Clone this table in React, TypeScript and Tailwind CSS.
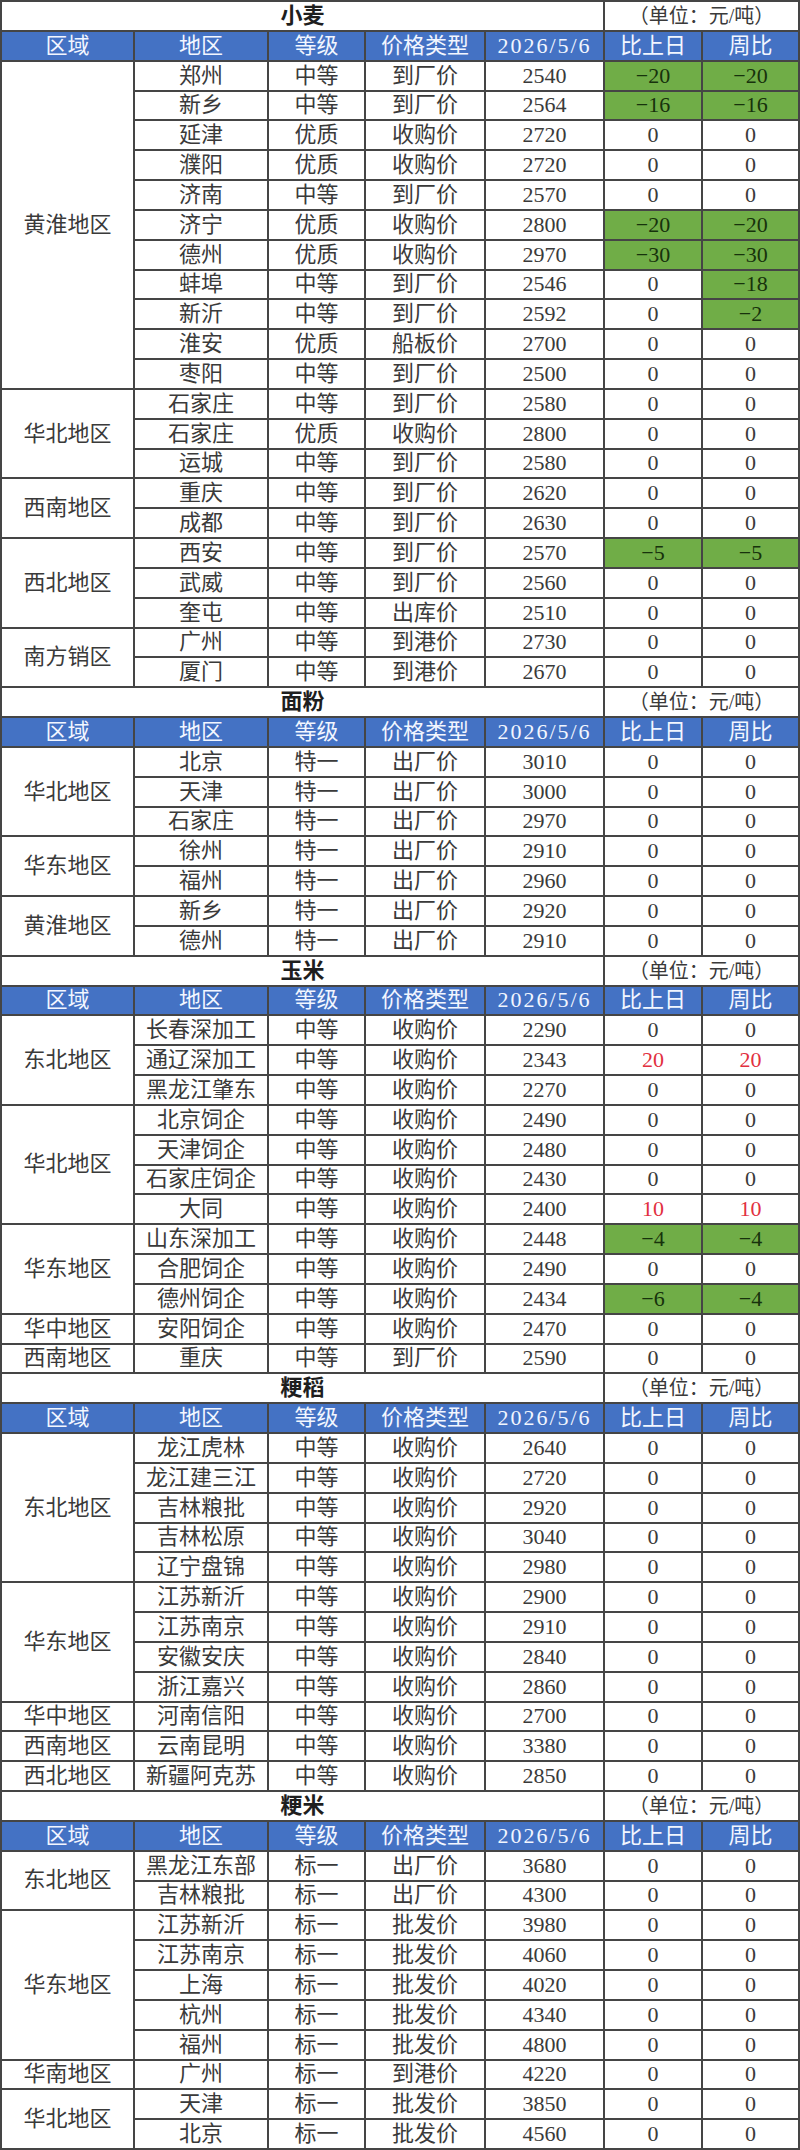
import React from "react";

type Row = [string, string, string, number, number, number];
type Group = { region: string; rows: Row[] };
type Section = { title: string; groups: Group[] };

const sections: Section[] = [
  {
    title: "小麦",
    groups: [
      {
        region: "黄淮地区",
        rows: [
          ["郑州", "中等", "到厂价", 2540, -20, -20],
          ["新乡", "中等", "到厂价", 2564, -16, -16],
          ["延津", "优质", "收购价", 2720, 0, 0],
          ["濮阳", "优质", "收购价", 2720, 0, 0],
          ["济南", "中等", "到厂价", 2570, 0, 0],
          ["济宁", "优质", "收购价", 2800, -20, -20],
          ["德州", "优质", "收购价", 2970, -30, -30],
          ["蚌埠", "中等", "到厂价", 2546, 0, -18],
          ["新沂", "中等", "到厂价", 2592, 0, -2],
          ["淮安", "优质", "船板价", 2700, 0, 0],
          ["枣阳", "中等", "到厂价", 2500, 0, 0],
        ],
      },
      {
        region: "华北地区",
        rows: [
          ["石家庄", "中等", "到厂价", 2580, 0, 0],
          ["石家庄", "优质", "收购价", 2800, 0, 0],
          ["运城", "中等", "到厂价", 2580, 0, 0],
        ],
      },
      {
        region: "西南地区",
        rows: [
          ["重庆", "中等", "到厂价", 2620, 0, 0],
          ["成都", "中等", "到厂价", 2630, 0, 0],
        ],
      },
      {
        region: "西北地区",
        rows: [
          ["西安", "中等", "到厂价", 2570, -5, -5],
          ["武威", "中等", "到厂价", 2560, 0, 0],
          ["奎屯", "中等", "出库价", 2510, 0, 0],
        ],
      },
      {
        region: "南方销区",
        rows: [
          ["广州", "中等", "到港价", 2730, 0, 0],
          ["厦门", "中等", "到港价", 2670, 0, 0],
        ],
      },
    ],
  },
  {
    title: "面粉",
    groups: [
      {
        region: "华北地区",
        rows: [
          ["北京", "特一", "出厂价", 3010, 0, 0],
          ["天津", "特一", "出厂价", 3000, 0, 0],
          ["石家庄", "特一", "出厂价", 2970, 0, 0],
        ],
      },
      {
        region: "华东地区",
        rows: [
          ["徐州", "特一", "出厂价", 2910, 0, 0],
          ["福州", "特一", "出厂价", 2960, 0, 0],
        ],
      },
      {
        region: "黄淮地区",
        rows: [
          ["新乡", "特一", "出厂价", 2920, 0, 0],
          ["德州", "特一", "出厂价", 2910, 0, 0],
        ],
      },
    ],
  },
  {
    title: "玉米",
    groups: [
      {
        region: "东北地区",
        rows: [
          ["长春深加工", "中等", "收购价", 2290, 0, 0],
          ["通辽深加工", "中等", "收购价", 2343, 20, 20],
          ["黑龙江肇东", "中等", "收购价", 2270, 0, 0],
        ],
      },
      {
        region: "华北地区",
        rows: [
          ["北京饲企", "中等", "收购价", 2490, 0, 0],
          ["天津饲企", "中等", "收购价", 2480, 0, 0],
          ["石家庄饲企", "中等", "收购价", 2430, 0, 0],
          ["大同", "中等", "收购价", 2400, 10, 10],
        ],
      },
      {
        region: "华东地区",
        rows: [
          ["山东深加工", "中等", "收购价", 2448, -4, -4],
          ["合肥饲企", "中等", "收购价", 2490, 0, 0],
          ["德州饲企", "中等", "收购价", 2434, -6, -4],
        ],
      },
      { region: "华中地区", rows: [["安阳饲企", "中等", "收购价", 2470, 0, 0]] },
      { region: "西南地区", rows: [["重庆", "中等", "到厂价", 2590, 0, 0]] },
    ],
  },
  {
    title: "粳稻",
    groups: [
      {
        region: "东北地区",
        rows: [
          ["龙江虎林", "中等", "收购价", 2640, 0, 0],
          ["龙江建三江", "中等", "收购价", 2720, 0, 0],
          ["吉林粮批", "中等", "收购价", 2920, 0, 0],
          ["吉林松原", "中等", "收购价", 3040, 0, 0],
          ["辽宁盘锦", "中等", "收购价", 2980, 0, 0],
        ],
      },
      {
        region: "华东地区",
        rows: [
          ["江苏新沂", "中等", "收购价", 2900, 0, 0],
          ["江苏南京", "中等", "收购价", 2910, 0, 0],
          ["安徽安庆", "中等", "收购价", 2840, 0, 0],
          ["浙江嘉兴", "中等", "收购价", 2860, 0, 0],
        ],
      },
      { region: "华中地区", rows: [["河南信阳", "中等", "收购价", 2700, 0, 0]] },
      { region: "西南地区", rows: [["云南昆明", "中等", "收购价", 3380, 0, 0]] },
      { region: "西北地区", rows: [["新疆阿克苏", "中等", "收购价", 2850, 0, 0]] },
    ],
  },
  {
    title: "粳米",
    groups: [
      {
        region: "东北地区",
        rows: [
          ["黑龙江东部", "标一", "出厂价", 3680, 0, 0],
          ["吉林粮批", "标一", "出厂价", 4300, 0, 0],
        ],
      },
      {
        region: "华东地区",
        rows: [
          ["江苏新沂", "标一", "批发价", 3980, 0, 0],
          ["江苏南京", "标一", "批发价", 4060, 0, 0],
          ["上海", "标一", "批发价", 4020, 0, 0],
          ["杭州", "标一", "批发价", 4340, 0, 0],
          ["福州", "标一", "批发价", 4800, 0, 0],
        ],
      },
      { region: "华南地区", rows: [["广州", "标一", "到港价", 4220, 0, 0]] },
      {
        region: "华北地区",
        rows: [
          ["天津", "标一", "批发价", 3850, 0, 0],
          ["北京", "标一", "批发价", 4560, 0, 0],
        ],
      },
    ],
  },
];

const spanClass: Record<number, string> = {
  1: "row-span-1",
  2: "row-span-2",
  3: "row-span-3",
  4: "row-span-4",
  5: "row-span-5",
  11: "row-span-11",
};

const base = "flex items-center justify-center text-[22px] leading-none";
const cell = `${base} bg-white text-[#3a3a3a]`;
const headCell = `${base} bg-[#4472c4] text-[#f2f6ff]`;

function fmt(v: number) {
  return v < 0 ? `\u2212${Math.abs(v)}` : `${v}`;
}

function ChangeCell({ v }: { v: number }) {
  if (v < 0) {
    return <div className={`${base} bg-[#70ad47] text-[#17320c]`}>{fmt(v)}</div>;
  }
  if (v > 0) {
    return <div className={`${base} bg-white text-[#e2303f]`}>{fmt(v)}</div>;
  }
  return <div className={cell}>{fmt(v)}</div>;
}

export default function App() {
  const items: React.ReactNode[] = [];
  sections.forEach((s, si) => {
    items.push(
      <div
        key={`t-${si}`}
        className="col-span-5 flex items-center justify-center bg-white text-[22px] font-bold leading-none text-[#1e1e1e]"
      >
        {s.title}
      </div>
    );
    items.push(
      <div
        key={`u-${si}`}
        className="col-span-2 flex items-center justify-center bg-white text-[20px] leading-none text-[#3a3a3a]"
      >
        （单位：元/吨）
      </div>
    );
    ["区域", "地区", "等级", "价格类型"].forEach((h) =>
      items.push(
        <div key={`h-${si}-${h}`} className={headCell}>
          {h}
        </div>
      )
    );
    items.push(
      <div key={`h-${si}-date`} className={`${headCell} tracking-[2px]`}>
        2026/5/6
      </div>
    );
    ["比上日", "周比"].forEach((h) =>
      items.push(
        <div key={`h-${si}-${h}`} className={headCell}>
          {h}
        </div>
      )
    );
    s.groups.forEach((g, gi) => {
      items.push(
        <div key={`g-${si}-${gi}`} className={`${cell} ${spanClass[g.rows.length]}`}>
          {g.region}
        </div>
      );
      g.rows.forEach((r, ri) => {
        const k = `${si}-${gi}-${ri}`;
        items.push(
          <div key={`a-${k}`} className={cell}>
            {r[0]}
          </div>,
          <div key={`b-${k}`} className={cell}>
            {r[1]}
          </div>,
          <div key={`c-${k}`} className={cell}>
            {r[2]}
          </div>,
          <div key={`d-${k}`} className={cell}>
            {r[3]}
          </div>,
          <ChangeCell key={`e-${k}`} v={r[4]} />,
          <ChangeCell key={`f-${k}`} v={r[5]} />
        );
      });
    });
  });

  return (
    <div className="h-[2150px] w-[800px] bg-white font-['Liberation_Serif','Noto_Sans_CJK_SC',serif]">
      <div className="grid h-full w-full grid-cols-[131px_132px_95px_118px_117px_96px_95px] grid-rows-[repeat(72,minmax(0,1fr))] gap-[2px] bg-[#454545] p-[2px]">
        {items}
      </div>
    </div>
  );
}
